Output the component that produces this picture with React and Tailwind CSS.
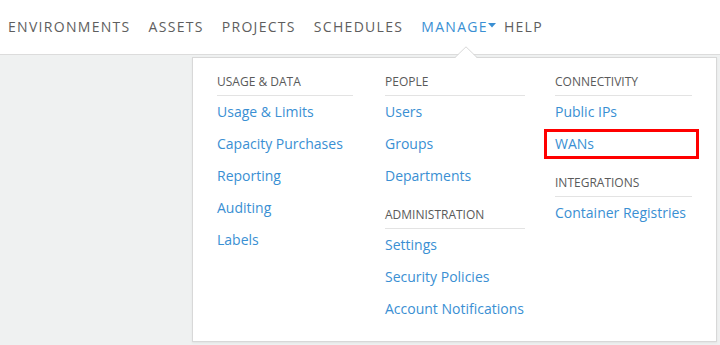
import React from "react";

const font = { fontFamily: '"Open Sans", "Liberation Sans", sans-serif' };

function Header({ children, className = "" }) {
  return (
    <div className={"border-b border-[#e3e3e3] pb-[3px] " + className}>
      <div className="h-[20px] leading-[20px] text-[12px] text-[#5a5a5a] uppercase">{children}</div>
    </div>
  );
}

function Item({ children, boxed }) {
  return (
    <div className="relative h-[32px] leading-[32px] text-[14px] text-[#3a8fd3]">
      {children}
      {boxed && (
        <div className="absolute left-[-11px] right-[-7px] top-[1px] bottom-[1px] border-[3px] border-[#ff0000]" />
      )}
    </div>
  );
}

export default function App() {
  const nav = ["ENVIRONMENTS", "ASSETS", "PROJECTS", "SCHEDULES"];
  return (
    <div style={font} className="w-[720px] h-[345px] bg-[#eff1f1] relative overflow-hidden">
      <div className="h-[55px] bg-white border-b border-[#dcdcdc] flex items-center pl-[8px] pb-[2px] gap-[18px] text-[14px] tracking-[1.3px] text-[#5e5e5e]">
        {nav.map((n) => (
          <span key={n}>{n}</span>
        ))}
        <span className="flex items-center text-[#3a8fd3]">
          MANAGE
          <svg width="8" height="5" viewBox="0 0 8 5" className="ml-[0px] mt-[-1px]">
            <polygon points="0,0 8,0 4,4.5" fill="#3a8fd3" />
          </svg>
        </span>
        <span className="-ml-[10px]">HELP</span>
      </div>

      <div className="absolute left-[192px] top-[57px] w-[525px] h-[285px] bg-white border border-[#d8d8d8] shadow-[0_1px_2px_rgba(0,0,0,0.06)]">
        <svg width="22" height="12" viewBox="0 0 22 12" className="absolute left-[262px] top-[-12px]">
          <polygon points="0,12 11,1 22,12" fill="#fff" />
          <polyline points="0,11.5 11,0.8 22,11.5" fill="none" stroke="#d8d8d8" strokeWidth="1" />
        </svg>
        <div className="flex pl-[24px] pt-[14px]">
          <div className="w-[168px]">
            <div className="w-[136px]">
              <Header>Usage &amp; Data</Header>
              <Item>Usage &amp; Limits</Item>
              <Item>Capacity Purchases</Item>
              <Item>Reporting</Item>
              <Item>Auditing</Item>
              <Item>Labels</Item>
            </div>
          </div>
          <div className="w-[170px]">
            <div className="w-[140px]">
              <Header>People</Header>
              <Item>Users</Item>
              <Item>Groups</Item>
              <Item>Departments</Item>
              <Header className="mt-[13px]">Administration</Header>
              <Item>Settings</Item>
              <Item>Security Policies</Item>
              <Item>Account Notifications</Item>
            </div>
          </div>
          <div className="w-[137px]">
            <Header>Connectivity</Header>
            <Item>Public IPs</Item>
            <Item boxed>WANs</Item>
            <Header className="mt-[13px]">Integrations</Header>
            <Item>Container Registries</Item>
          </div>
        </div>
      </div>
    </div>
  );
}
